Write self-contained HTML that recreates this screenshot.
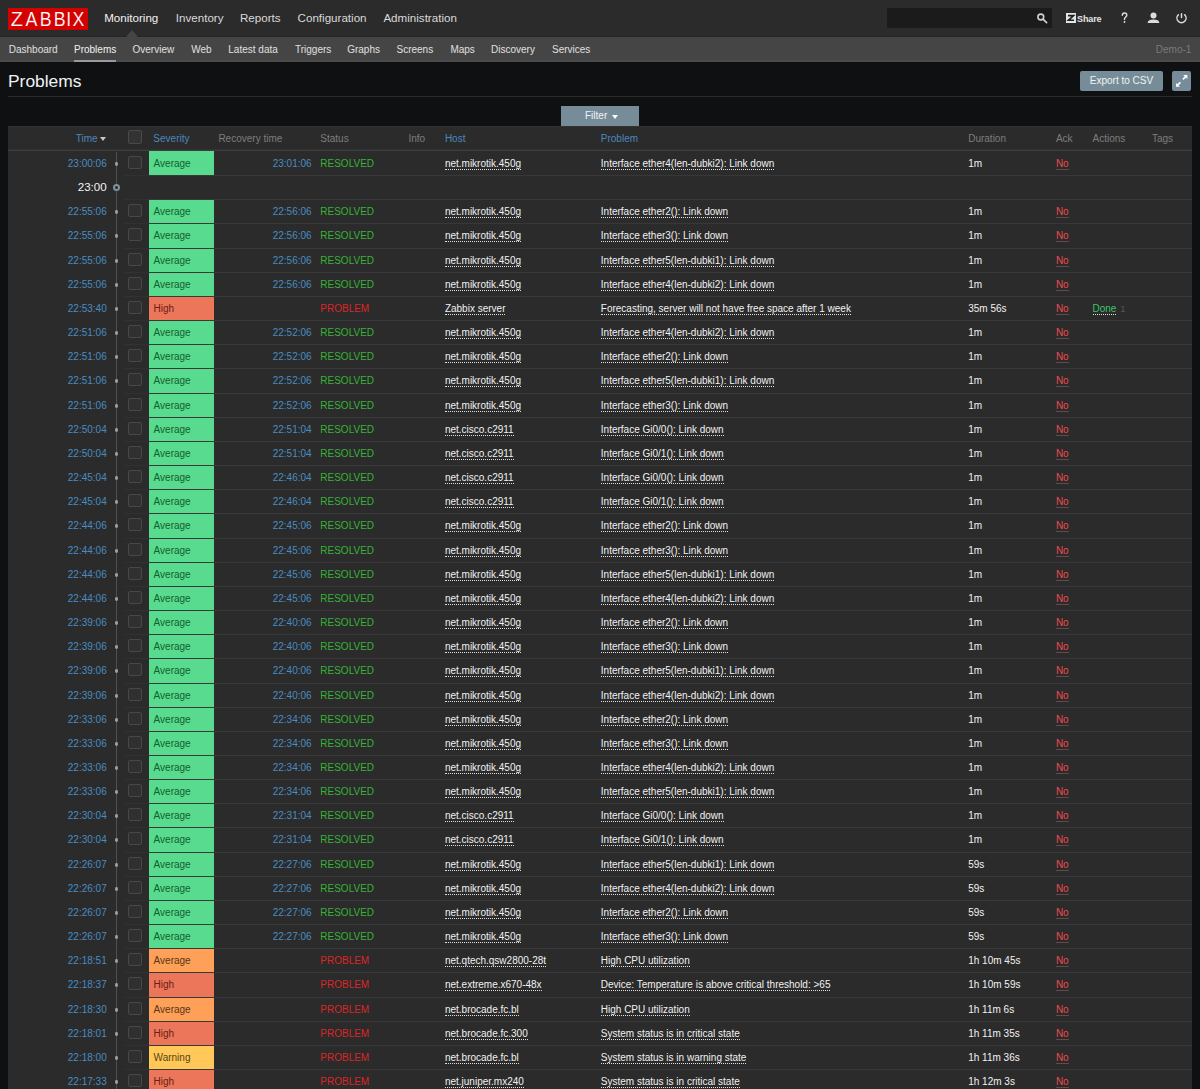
<!DOCTYPE html>
<html><head><meta charset="utf-8"><title>Problems</title>
<style>
*{margin:0;padding:0;box-sizing:border-box}
html,body{width:1200px;height:1089px;overflow:hidden;background:#0e1012;font-family:"Liberation Sans",sans-serif;color:#f2f2f2}
.abs{position:absolute}
#top{position:absolute;left:0;top:0;width:1200px;height:37px;background:#2b2b2b}
#logo{position:absolute;left:8px;top:8px;width:79.5px;height:22px;background:#d40000;color:#fff;font-size:21px;line-height:20.5px;text-align:center;letter-spacing:0px;text-indent:0.5px}
.nav{position:absolute;top:-0.6px;height:37px;line-height:37px;font-size:11.6px;color:#f2f2f2;white-space:nowrap}
.nav.dim{color:#d9d9d9}
#tri{position:absolute;left:125.5px;top:30px;width:0;height:0;border-left:6.5px solid transparent;border-right:6.5px solid transparent;border-bottom:7px solid #454545;z-index:2}
#search{position:absolute;left:887px;top:8px;width:165px;height:20px;background:#1b1b1b}
#sub{position:absolute;left:0;top:37px;width:1200px;height:25px;background:#454545;border-bottom:2px solid #4b4b4b}
#topb{position:absolute;left:0;top:35.5px;width:1200px;height:1.5px;background:#262626}
.sn{position:absolute;top:37px;height:25px;line-height:25px;font-size:10px;color:#f2f2f2;white-space:nowrap}
#uline{position:absolute;left:74px;top:60px;width:42px;height:2px;background:#9a9a9a}
#title{position:absolute;left:8px;top:67px;font-size:17.4px;line-height:28px;color:#f2f2f2}
#hsep{position:absolute;left:8px;top:96px;width:1184px;height:1px;background:#2b2b2b}
.btn{position:absolute;top:71px;height:19.5px;background:#768d99;border-radius:2px;color:#f2f2f2;font-size:10px;line-height:19.5px;text-align:center}
#filter{position:absolute;left:561px;top:106px;width:78px;height:20px;background:#768d99;color:#f2f2f2;font-size:10px;line-height:20px}
#table{position:absolute;left:8px;top:126px;width:1184px;height:1000px;background:#2b2b2b;border-top:1px solid #323232}
#thead{position:absolute;left:8px;top:126px;width:1184px;height:25px}
#thb{position:absolute;left:8px;top:149px;width:1184px;height:2px;background:linear-gradient(#313131 0 50%,#3e3e3e 50% 100%)}
.th{position:absolute;top:126.8px;height:23px;line-height:24px;font-size:10px;color:#7d7d7d;white-space:nowrap}
.th.lnk{color:#4a88bd}
#tline{position:absolute;left:115.6px;top:152px;width:1.6px;height:1000px;background:#505050}
.row{position:absolute;left:0;width:1200px;height:24px;line-height:24.2px;font-size:10px;white-space:nowrap}
.row:after{content:"";position:absolute;left:123.5px;width:1068.5px;bottom:0;height:1px;background:linear-gradient(to right,#313131 0,#313131 25px,#383838 25px)}
.c{position:absolute;top:0}
.tm{right:1093.3px;color:#4a8cc0}
.rec{right:888.4px;color:#4a8cc0}
.st{left:320.3px}
.green{color:#36b336}
.red{color:#dc2626}
.host{left:444.9px}
.prob{left:600.8px}
.host u,.prob u{text-decoration:none;border-bottom:1px dotted #e0e0e0;padding-bottom:0}
.dur{left:968.2px}
.ack{left:1055.9px}
.ack b{font-weight:normal;color:#ee4b4b;border-bottom:1px solid #644a4a;padding-bottom:0px}
.act{left:1092.5px}
.act u.done{text-decoration:none;color:#3cc46a;border-bottom:1px dotted #e0e0e0;padding-bottom:0px}
.act sup{font-size:8.5px;color:#5a5a5a;vertical-align:baseline;position:relative;top:-0.5px;margin-left:4px}
.dot{position:absolute;left:114.75px;top:10.25px;width:3.5px;height:3.5px;border-radius:40%;background:#9c9c9c}
.cb{position:absolute;left:128.3px;top:3.6px;width:13.4px;height:13.4px;border:1px solid #484848;border-radius:2px;background:#303030}
.sev{position:absolute;left:148.6px;top:0;width:65.4px;height:23px;padding-left:5px;line-height:24.8px}
.r0{line-height:26px}.r0 .sev{line-height:26.6px}.r0 .dot{top:11.05px}.r0 .cb{top:4.5px}
.s-ok{background:#59db8f;color:#12602e}
.s-high{background:#eb765a;color:#6a2019}
.s-avg{background:#ffa059;color:#5a3516}
.s-warn{background:#ffc859;color:#5a4516}
.sept{position:absolute;right:1093.3px;top:-1.5px;font-size:11.6px;color:#f2f2f2}
.ring{position:absolute;left:112.8px;top:8px;width:7.4px;height:7.4px;border-radius:50%;border:2.1px solid #7a939c;background:#2b2b2b}
</style></head>
<body>
<div id="top"></div>
<div id="logo"></div><svg class="abs" style="left:0;top:0" width="100" height="37" viewBox="0 0 100 37"><g font-family="Liberation Sans" font-size="21" fill="#fff" stroke="#d40000" stroke-width="0.2"><text transform="translate(10.8 25.6) scale(0.95 1)">Z</text><text transform="translate(25.4 25.6) scale(0.85 1)">A</text><text transform="translate(39.85 25.6) scale(0.85 1)">B</text><text transform="translate(53.85 25.6) scale(0.85 1)">B</text><text transform="translate(66.3 25.6) scale(0.85 1)">I</text><text transform="translate(72.4 25.6) scale(0.85 1)">X</text></g></svg>
<div class="nav" style="left:104.2px">Monitoring</div>
<div class="nav dim" style="left:175.8px">Inventory</div>
<div class="nav dim" style="left:240px">Reports</div>
<div class="nav dim" style="left:297.6px">Configuration</div>
<div class="nav dim" style="left:383.4px">Administration</div>
<div id="search"></div>
<svg class="abs" style="left:1034px;top:10px" width="14" height="14" viewBox="0 0 14 14"><circle cx="6.8" cy="7" r="2.9" fill="none" stroke="#d0d0d0" stroke-width="1.6"/><path d="M9 9.2 L12.6 12.6" stroke="#d0d0d0" stroke-width="1.7" stroke-linecap="round"/></svg>
<svg class="abs" style="left:1066px;top:13px" width="10" height="10" viewBox="0 0 10 10"><rect width="10" height="10" fill="#e4e4e4"/><path d="M2 2.6 H7.6 L2.4 7.3 H8" fill="none" stroke="#1e1e1e" stroke-width="1.6"/></svg>
<div class="abs" style="left:1077px;top:9px;font-size:9px;font-weight:bold;line-height:20px;color:#e4e4e4;letter-spacing:-0.1px">Share</div>
<svg class="abs" style="left:1121px;top:12px" width="8" height="12" viewBox="0 0 8 12"><path d="M1.3 3.3 C1.3 1.7 2.3 1 3.5 1 C4.8 1 5.8 1.9 5.8 3.1 C5.8 4.4 4.9 4.9 4.2 5.5 C3.6 6 3.5 6.5 3.5 7.6" fill="none" stroke="#dcdcdc" stroke-width="1.4" stroke-linecap="round"/><circle cx="3.5" cy="10" r="0.95" fill="#dcdcdc"/></svg>
<svg class="abs" style="left:1146px;top:11px" width="14" height="14" viewBox="0 0 14 14"><circle cx="7.5" cy="4.6" r="3" fill="#dcdcdc"/><path d="M1.6 12 C1.9 9.6 4 8.6 7.5 8.6 C11 8.6 13.1 9.6 13.4 12 Z" fill="#dcdcdc"/></svg>
<svg class="abs" style="left:1174px;top:11px" width="14" height="14" viewBox="0 0 14 14"><path d="M4.28 3.88 A4.55 4.55 0 1 0 10.72 3.88" fill="none" stroke="#dcdcdc" stroke-width="1.5" stroke-linecap="round"/><path d="M7.5 2.85 V6.6" stroke="#dcdcdc" stroke-width="1.5" stroke-linecap="round"/></svg>

<div id="tri"></div>
<div id="topb"></div><div id="sub"></div>
<div class="sn" style="left:8.75px;color:#e0e0e0">Dashboard</div>
<div class="sn" style="left:74px">Problems</div>
<div class="sn" style="left:132.5px;color:#e0e0e0">Overview</div>
<div class="sn" style="left:191.3px;color:#e0e0e0">Web</div>
<div class="sn" style="left:228.3px;color:#e0e0e0">Latest data</div>
<div class="sn" style="left:295px;color:#e0e0e0">Triggers</div>
<div class="sn" style="left:347.2px;color:#e0e0e0">Graphs</div>
<div class="sn" style="left:396.5px;color:#e0e0e0">Screens</div>
<div class="sn" style="left:450.4px;color:#e0e0e0">Maps</div>
<div class="sn" style="left:491px;color:#e0e0e0">Discovery</div>
<div class="sn" style="left:552px;color:#e0e0e0">Services</div>
<div class="sn" style="right:8.6px;color:#7a7a7a">Demo-1</div>
<div id="uline"></div>

<div id="title">Problems</div>
<div id="hsep"></div>
<div class="btn" style="left:1080px;width:83px">Export to CSV</div>
<div class="btn" style="left:1172px;width:19.3px"><svg width="19" height="19" viewBox="0 0 19 19" style="position:absolute;left:0;top:0"><path d="M11.3 3.9 H15.3 V7.9 Z" fill="#fff"/><path d="M14.2 5 L10.9 8.3" stroke="#fff" stroke-width="1.7"/><path d="M4 11.9 V15.8 H7.9 Z" fill="#fff"/><path d="M5.1 14.7 L8.4 11.4" stroke="#fff" stroke-width="1.7"/></svg></div>

<div id="table"></div>
<div id="filter"><span class="abs" style="left:24px;top:0">Filter</span><span class="abs" style="left:51px;top:8.8px;width:0;height:0;border-left:3.4px solid transparent;border-right:3.4px solid transparent;border-top:4.6px solid #fff"></span></div>
<div id="thb"></div>
<div class="th lnk" style="left:75.75px">Time</div>
<div class="abs" style="left:99.7px;top:136.7px;width:0;height:0;border-left:3.5px solid transparent;border-right:3.5px solid transparent;border-top:4.6px solid #c8c8c8"></div>
<div class="abs" style="left:128.3px;top:130.2px;width:13.4px;height:13.4px;border:1px solid #4a4a4a;border-radius:2px;background:#333"></div>
<div class="th lnk" style="left:153.35px">Severity</div>
<div class="th" style="left:218.4px">Recovery time</div>
<div class="th" style="left:320.3px">Status</div>
<div class="th" style="left:408.4px">Info</div>
<div class="th lnk" style="left:444.9px">Host</div>
<div class="th lnk" style="left:600.8px">Problem</div>
<div class="th" style="left:968.2px">Duration</div>
<div class="th" style="left:1055.9px">Ack</div>
<div class="th" style="left:1092.5px">Actions</div>
<div class="th" style="left:1152px">Tags</div>
<div id="tline"></div>
<div class="row r0" style="top:151px;height:25px"><span class="c tm">23:00:06</span><i class="dot"></i><i class="cb"></i><span class="sev s-ok" style="height:24px">Average</span><span class="c rec">23:01:06</span><span class="c st green">RESOLVED</span><span class="c host"><u>net.mikrotik.450g</u></span><span class="c prob"><u>Interface ether4(len-dubki2): Link down</u></span><span class="c dur">1m</span><span class="c ack"><b>No</b></span></div>
<div class="row sep" style="top:176px;height:24px"><span class="sept">23:00</span><i class="ring"></i></div>
<div class="row" style="top:200px;height:24px"><span class="c tm">22:55:06</span><i class="dot"></i><i class="cb"></i><span class="sev s-ok" style="height:23px">Average</span><span class="c rec">22:56:06</span><span class="c st green">RESOLVED</span><span class="c host"><u>net.mikrotik.450g</u></span><span class="c prob"><u>Interface ether2(): Link down</u></span><span class="c dur">1m</span><span class="c ack"><b>No</b></span></div>
<div class="row" style="top:224px;height:25px"><span class="c tm">22:55:06</span><i class="dot"></i><i class="cb"></i><span class="sev s-ok" style="height:24px">Average</span><span class="c rec">22:56:06</span><span class="c st green">RESOLVED</span><span class="c host"><u>net.mikrotik.450g</u></span><span class="c prob"><u>Interface ether3(): Link down</u></span><span class="c dur">1m</span><span class="c ack"><b>No</b></span></div>
<div class="row" style="top:249px;height:24px"><span class="c tm">22:55:06</span><i class="dot"></i><i class="cb"></i><span class="sev s-ok" style="height:23px">Average</span><span class="c rec">22:56:06</span><span class="c st green">RESOLVED</span><span class="c host"><u>net.mikrotik.450g</u></span><span class="c prob"><u>Interface ether5(len-dubki1): Link down</u></span><span class="c dur">1m</span><span class="c ack"><b>No</b></span></div>
<div class="row" style="top:273px;height:24px"><span class="c tm">22:55:06</span><i class="dot"></i><i class="cb"></i><span class="sev s-ok" style="height:23px">Average</span><span class="c rec">22:56:06</span><span class="c st green">RESOLVED</span><span class="c host"><u>net.mikrotik.450g</u></span><span class="c prob"><u>Interface ether4(len-dubki2): Link down</u></span><span class="c dur">1m</span><span class="c ack"><b>No</b></span></div>
<div class="row" style="top:297px;height:24px"><span class="c tm">22:53:40</span><i class="dot"></i><i class="cb"></i><span class="sev s-high" style="height:23px">High</span><span class="c st red">PROBLEM</span><span class="c host"><u>Zabbix server</u></span><span class="c prob"><u>Forecasting, server will not have free space after 1 week</u></span><span class="c dur">35m 56s</span><span class="c ack"><b>No</b></span><span class="c act"><u class="done">Done</u><sup>1</sup></span></div>
<div class="row" style="top:321px;height:24px"><span class="c tm">22:51:06</span><i class="dot"></i><i class="cb"></i><span class="sev s-ok" style="height:23px">Average</span><span class="c rec">22:52:06</span><span class="c st green">RESOLVED</span><span class="c host"><u>net.mikrotik.450g</u></span><span class="c prob"><u>Interface ether4(len-dubki2): Link down</u></span><span class="c dur">1m</span><span class="c ack"><b>No</b></span></div>
<div class="row" style="top:345px;height:24px"><span class="c tm">22:51:06</span><i class="dot"></i><i class="cb"></i><span class="sev s-ok" style="height:23px">Average</span><span class="c rec">22:52:06</span><span class="c st green">RESOLVED</span><span class="c host"><u>net.mikrotik.450g</u></span><span class="c prob"><u>Interface ether2(): Link down</u></span><span class="c dur">1m</span><span class="c ack"><b>No</b></span></div>
<div class="row" style="top:369px;height:25px"><span class="c tm">22:51:06</span><i class="dot"></i><i class="cb"></i><span class="sev s-ok" style="height:24px">Average</span><span class="c rec">22:52:06</span><span class="c st green">RESOLVED</span><span class="c host"><u>net.mikrotik.450g</u></span><span class="c prob"><u>Interface ether5(len-dubki1): Link down</u></span><span class="c dur">1m</span><span class="c ack"><b>No</b></span></div>
<div class="row" style="top:394px;height:24px"><span class="c tm">22:51:06</span><i class="dot"></i><i class="cb"></i><span class="sev s-ok" style="height:23px">Average</span><span class="c rec">22:52:06</span><span class="c st green">RESOLVED</span><span class="c host"><u>net.mikrotik.450g</u></span><span class="c prob"><u>Interface ether3(): Link down</u></span><span class="c dur">1m</span><span class="c ack"><b>No</b></span></div>
<div class="row" style="top:418px;height:24px"><span class="c tm">22:50:04</span><i class="dot"></i><i class="cb"></i><span class="sev s-ok" style="height:23px">Average</span><span class="c rec">22:51:04</span><span class="c st green">RESOLVED</span><span class="c host"><u>net.cisco.c2911</u></span><span class="c prob"><u>Interface Gi0/0(): Link down</u></span><span class="c dur">1m</span><span class="c ack"><b>No</b></span></div>
<div class="row" style="top:442px;height:24px"><span class="c tm">22:50:04</span><i class="dot"></i><i class="cb"></i><span class="sev s-ok" style="height:23px">Average</span><span class="c rec">22:51:04</span><span class="c st green">RESOLVED</span><span class="c host"><u>net.cisco.c2911</u></span><span class="c prob"><u>Interface Gi0/1(): Link down</u></span><span class="c dur">1m</span><span class="c ack"><b>No</b></span></div>
<div class="row" style="top:466px;height:24px"><span class="c tm">22:45:04</span><i class="dot"></i><i class="cb"></i><span class="sev s-ok" style="height:23px">Average</span><span class="c rec">22:46:04</span><span class="c st green">RESOLVED</span><span class="c host"><u>net.cisco.c2911</u></span><span class="c prob"><u>Interface Gi0/0(): Link down</u></span><span class="c dur">1m</span><span class="c ack"><b>No</b></span></div>
<div class="row" style="top:490px;height:24px"><span class="c tm">22:45:04</span><i class="dot"></i><i class="cb"></i><span class="sev s-ok" style="height:23px">Average</span><span class="c rec">22:46:04</span><span class="c st green">RESOLVED</span><span class="c host"><u>net.cisco.c2911</u></span><span class="c prob"><u>Interface Gi0/1(): Link down</u></span><span class="c dur">1m</span><span class="c ack"><b>No</b></span></div>
<div class="row" style="top:514px;height:25px"><span class="c tm">22:44:06</span><i class="dot"></i><i class="cb"></i><span class="sev s-ok" style="height:24px">Average</span><span class="c rec">22:45:06</span><span class="c st green">RESOLVED</span><span class="c host"><u>net.mikrotik.450g</u></span><span class="c prob"><u>Interface ether2(): Link down</u></span><span class="c dur">1m</span><span class="c ack"><b>No</b></span></div>
<div class="row" style="top:539px;height:24px"><span class="c tm">22:44:06</span><i class="dot"></i><i class="cb"></i><span class="sev s-ok" style="height:23px">Average</span><span class="c rec">22:45:06</span><span class="c st green">RESOLVED</span><span class="c host"><u>net.mikrotik.450g</u></span><span class="c prob"><u>Interface ether3(): Link down</u></span><span class="c dur">1m</span><span class="c ack"><b>No</b></span></div>
<div class="row" style="top:563px;height:24px"><span class="c tm">22:44:06</span><i class="dot"></i><i class="cb"></i><span class="sev s-ok" style="height:23px">Average</span><span class="c rec">22:45:06</span><span class="c st green">RESOLVED</span><span class="c host"><u>net.mikrotik.450g</u></span><span class="c prob"><u>Interface ether5(len-dubki1): Link down</u></span><span class="c dur">1m</span><span class="c ack"><b>No</b></span></div>
<div class="row" style="top:587px;height:24px"><span class="c tm">22:44:06</span><i class="dot"></i><i class="cb"></i><span class="sev s-ok" style="height:23px">Average</span><span class="c rec">22:45:06</span><span class="c st green">RESOLVED</span><span class="c host"><u>net.mikrotik.450g</u></span><span class="c prob"><u>Interface ether4(len-dubki2): Link down</u></span><span class="c dur">1m</span><span class="c ack"><b>No</b></span></div>
<div class="row" style="top:611px;height:24px"><span class="c tm">22:39:06</span><i class="dot"></i><i class="cb"></i><span class="sev s-ok" style="height:23px">Average</span><span class="c rec">22:40:06</span><span class="c st green">RESOLVED</span><span class="c host"><u>net.mikrotik.450g</u></span><span class="c prob"><u>Interface ether2(): Link down</u></span><span class="c dur">1m</span><span class="c ack"><b>No</b></span></div>
<div class="row" style="top:635px;height:24px"><span class="c tm">22:39:06</span><i class="dot"></i><i class="cb"></i><span class="sev s-ok" style="height:23px">Average</span><span class="c rec">22:40:06</span><span class="c st green">RESOLVED</span><span class="c host"><u>net.mikrotik.450g</u></span><span class="c prob"><u>Interface ether3(): Link down</u></span><span class="c dur">1m</span><span class="c ack"><b>No</b></span></div>
<div class="row" style="top:659px;height:25px"><span class="c tm">22:39:06</span><i class="dot"></i><i class="cb"></i><span class="sev s-ok" style="height:24px">Average</span><span class="c rec">22:40:06</span><span class="c st green">RESOLVED</span><span class="c host"><u>net.mikrotik.450g</u></span><span class="c prob"><u>Interface ether5(len-dubki1): Link down</u></span><span class="c dur">1m</span><span class="c ack"><b>No</b></span></div>
<div class="row" style="top:684px;height:24px"><span class="c tm">22:39:06</span><i class="dot"></i><i class="cb"></i><span class="sev s-ok" style="height:23px">Average</span><span class="c rec">22:40:06</span><span class="c st green">RESOLVED</span><span class="c host"><u>net.mikrotik.450g</u></span><span class="c prob"><u>Interface ether4(len-dubki2): Link down</u></span><span class="c dur">1m</span><span class="c ack"><b>No</b></span></div>
<div class="row" style="top:708px;height:24px"><span class="c tm">22:33:06</span><i class="dot"></i><i class="cb"></i><span class="sev s-ok" style="height:23px">Average</span><span class="c rec">22:34:06</span><span class="c st green">RESOLVED</span><span class="c host"><u>net.mikrotik.450g</u></span><span class="c prob"><u>Interface ether2(): Link down</u></span><span class="c dur">1m</span><span class="c ack"><b>No</b></span></div>
<div class="row" style="top:732px;height:24px"><span class="c tm">22:33:06</span><i class="dot"></i><i class="cb"></i><span class="sev s-ok" style="height:23px">Average</span><span class="c rec">22:34:06</span><span class="c st green">RESOLVED</span><span class="c host"><u>net.mikrotik.450g</u></span><span class="c prob"><u>Interface ether3(): Link down</u></span><span class="c dur">1m</span><span class="c ack"><b>No</b></span></div>
<div class="row" style="top:756px;height:24px"><span class="c tm">22:33:06</span><i class="dot"></i><i class="cb"></i><span class="sev s-ok" style="height:23px">Average</span><span class="c rec">22:34:06</span><span class="c st green">RESOLVED</span><span class="c host"><u>net.mikrotik.450g</u></span><span class="c prob"><u>Interface ether4(len-dubki2): Link down</u></span><span class="c dur">1m</span><span class="c ack"><b>No</b></span></div>
<div class="row" style="top:780px;height:24px"><span class="c tm">22:33:06</span><i class="dot"></i><i class="cb"></i><span class="sev s-ok" style="height:23px">Average</span><span class="c rec">22:34:06</span><span class="c st green">RESOLVED</span><span class="c host"><u>net.mikrotik.450g</u></span><span class="c prob"><u>Interface ether5(len-dubki1): Link down</u></span><span class="c dur">1m</span><span class="c ack"><b>No</b></span></div>
<div class="row" style="top:804px;height:24px"><span class="c tm">22:30:04</span><i class="dot"></i><i class="cb"></i><span class="sev s-ok" style="height:23px">Average</span><span class="c rec">22:31:04</span><span class="c st green">RESOLVED</span><span class="c host"><u>net.cisco.c2911</u></span><span class="c prob"><u>Interface Gi0/0(): Link down</u></span><span class="c dur">1m</span><span class="c ack"><b>No</b></span></div>
<div class="row" style="top:828px;height:25px"><span class="c tm">22:30:04</span><i class="dot"></i><i class="cb"></i><span class="sev s-ok" style="height:24px">Average</span><span class="c rec">22:31:04</span><span class="c st green">RESOLVED</span><span class="c host"><u>net.cisco.c2911</u></span><span class="c prob"><u>Interface Gi0/1(): Link down</u></span><span class="c dur">1m</span><span class="c ack"><b>No</b></span></div>
<div class="row" style="top:853px;height:24px"><span class="c tm">22:26:07</span><i class="dot"></i><i class="cb"></i><span class="sev s-ok" style="height:23px">Average</span><span class="c rec">22:27:06</span><span class="c st green">RESOLVED</span><span class="c host"><u>net.mikrotik.450g</u></span><span class="c prob"><u>Interface ether5(len-dubki1): Link down</u></span><span class="c dur">59s</span><span class="c ack"><b>No</b></span></div>
<div class="row" style="top:877px;height:24px"><span class="c tm">22:26:07</span><i class="dot"></i><i class="cb"></i><span class="sev s-ok" style="height:23px">Average</span><span class="c rec">22:27:06</span><span class="c st green">RESOLVED</span><span class="c host"><u>net.mikrotik.450g</u></span><span class="c prob"><u>Interface ether4(len-dubki2): Link down</u></span><span class="c dur">59s</span><span class="c ack"><b>No</b></span></div>
<div class="row" style="top:901px;height:24px"><span class="c tm">22:26:07</span><i class="dot"></i><i class="cb"></i><span class="sev s-ok" style="height:23px">Average</span><span class="c rec">22:27:06</span><span class="c st green">RESOLVED</span><span class="c host"><u>net.mikrotik.450g</u></span><span class="c prob"><u>Interface ether2(): Link down</u></span><span class="c dur">59s</span><span class="c ack"><b>No</b></span></div>
<div class="row" style="top:925px;height:24px"><span class="c tm">22:26:07</span><i class="dot"></i><i class="cb"></i><span class="sev s-ok" style="height:23px">Average</span><span class="c rec">22:27:06</span><span class="c st green">RESOLVED</span><span class="c host"><u>net.mikrotik.450g</u></span><span class="c prob"><u>Interface ether3(): Link down</u></span><span class="c dur">59s</span><span class="c ack"><b>No</b></span></div>
<div class="row" style="top:949px;height:24px"><span class="c tm">22:18:51</span><i class="dot"></i><i class="cb"></i><span class="sev s-avg" style="height:23px">Average</span><span class="c st red">PROBLEM</span><span class="c host"><u>net.qtech.qsw2800-28t</u></span><span class="c prob"><u>High CPU utilization</u></span><span class="c dur">1h 10m 45s</span><span class="c ack"><b>No</b></span></div>
<div class="row" style="top:973px;height:25px"><span class="c tm">22:18:37</span><i class="dot"></i><i class="cb"></i><span class="sev s-high" style="height:24px">High</span><span class="c st red">PROBLEM</span><span class="c host"><u>net.extreme.x670-48x</u></span><span class="c prob"><u>Device: Temperature is above critical threshold: &gt;65</u></span><span class="c dur">1h 10m 59s</span><span class="c ack"><b>No</b></span></div>
<div class="row" style="top:998px;height:24px"><span class="c tm">22:18:30</span><i class="dot"></i><i class="cb"></i><span class="sev s-avg" style="height:23px">Average</span><span class="c st red">PROBLEM</span><span class="c host"><u>net.brocade.fc.bl</u></span><span class="c prob"><u>High CPU utilization</u></span><span class="c dur">1h 11m 6s</span><span class="c ack"><b>No</b></span></div>
<div class="row" style="top:1022px;height:24px"><span class="c tm">22:18:01</span><i class="dot"></i><i class="cb"></i><span class="sev s-high" style="height:23px">High</span><span class="c st red">PROBLEM</span><span class="c host"><u>net.brocade.fc.300</u></span><span class="c prob"><u>System status is in critical state</u></span><span class="c dur">1h 11m 35s</span><span class="c ack"><b>No</b></span></div>
<div class="row" style="top:1046px;height:24px"><span class="c tm">22:18:00</span><i class="dot"></i><i class="cb"></i><span class="sev s-warn" style="height:23px">Warning</span><span class="c st red">PROBLEM</span><span class="c host"><u>net.brocade.fc.bl</u></span><span class="c prob"><u>System status is in warning state</u></span><span class="c dur">1h 11m 36s</span><span class="c ack"><b>No</b></span></div>
<div class="row" style="top:1070px;height:24px"><span class="c tm">22:17:33</span><i class="dot"></i><i class="cb"></i><span class="sev s-high" style="height:23px">High</span><span class="c st red">PROBLEM</span><span class="c host"><u>net.juniper.mx240</u></span><span class="c prob"><u>System status is in critical state</u></span><span class="c dur">1h 12m 3s</span><span class="c ack"><b>No</b></span></div>
<div class="row" style="top:1094px;height:24px"><span class="c tm">22:17:10</span><i class="dot"></i><i class="cb"></i><span class="sev s-high" style="height:23px">High</span><span class="c st red">PROBLEM</span><span class="c host"><u>net.juniper.mx240</u></span><span class="c prob"><u>System status is in critical state</u></span><span class="c dur">1h 12m 26s</span><span class="c ack"><b>No</b></span></div>
</body></html>
